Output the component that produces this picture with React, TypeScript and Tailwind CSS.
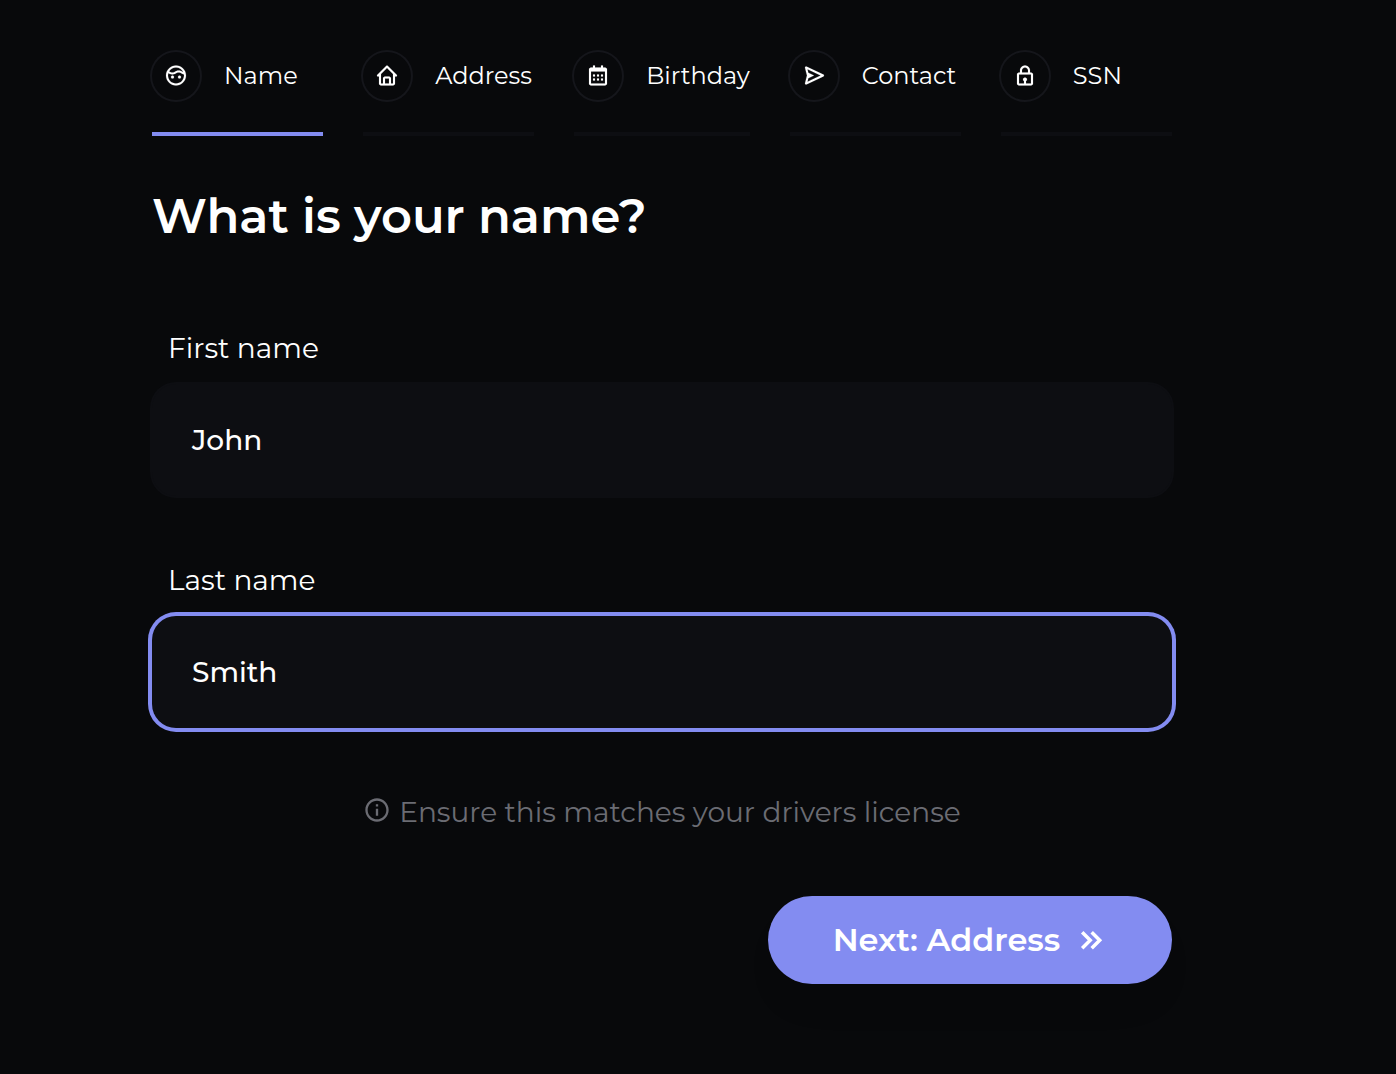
import type { IconType } from "react-icons";
import { BiCalendar, BiFace, BiHome, BiInfoCircle, BiLock, BiSend } from "react-icons/bi";

const steps: { label: string; icon: IconType; active?: boolean }[] = [
  { label: "Name", icon: BiFace, active: true },
  { label: "Address", icon: BiHome },
  { label: "Birthday", icon: BiCalendar },
  { label: "Contact", icon: BiSend },
  { label: "SSN", icon: BiLock },
];

function Field({ label, value, focused }: { label: string; value: string; focused?: boolean }) {
  return (
    <label className="flex flex-col gap-4">
      <span className="pl-4 text-[28px] leading-10">{label}</span>
      <span
        className={
          focused
            ? "flex h-28 items-center rounded-3xl bg-[#0d0e12] px-10 text-[28px] font-medium ring-4 ring-[#838cf1]"
            : "flex h-28 items-center rounded-3xl bg-[#0d0e12] px-10 text-[28px] font-medium ring-2 ring-[#0d0e12]"
        }
      >
        {value}
      </span>
    </label>
  );
}

function DoubleChevron() {
  return (
    <svg viewBox="0 0 40 40" className="size-10 fill-none stroke-current stroke-[3.5]">
      <path d="M10.2 12.2l8 8-8 8M19.7 12.2l8 8-8 8" />
    </svg>
  );
}

export default function App() {
  return (
    <main className="h-[1074px] w-[1396px] overflow-hidden bg-[#08090b] pt-[52px] pl-[152px] font-['Montserrat','Inter',sans-serif] text-white">
      <div className="flex w-[1020px] flex-col">
        <nav className="flex gap-10">
          {steps.map(({ label, icon: Icon, active }) => (
            <div
              key={label}
              className={
                active
                  ? "flex h-[84px] flex-1 items-start border-b-4 border-[#838cf1]"
                  : "flex h-[84px] flex-1 items-start border-b-4 border-[#0d0e12]"
              }
            >
              <div className="flex items-center gap-6">
                <span className="flex size-12 shrink-0 items-center justify-center rounded-full ring-2 ring-[#15161b]">
                  <Icon className="size-6 -translate-y-[0.5px] stroke-[0.15]" />
                </span>
                <span className="text-2xl">{label}</span>
              </div>
            </div>
          ))}
        </nav>

        <h1 className="mt-12 text-5xl leading-16 font-semibold">What is your name?</h1>

        <div className="mt-20 flex flex-col gap-16">
          <Field label="First name" value="John" />
          <Field label="Last name" value="Smith" focused />
        </div>

        <p className="mt-16 flex h-10 items-center justify-center gap-2 text-[28px] text-[#6b6c73]">
          <BiInfoCircle className="size-7 -translate-y-0.5 stroke-0" />
          Ensure this matches your drivers license
        </p>

        <button className="mt-16 flex h-22 w-[404px] items-center justify-center gap-3 self-end rounded-full bg-[#838cf1] pl-[5px] text-[32px] font-semibold shadow-[0_25px_50px_-30px_rgba(0,0,0,0.25)]">
          Next: Address
          <DoubleChevron />
        </button>
      </div>
    </main>
  );
}
